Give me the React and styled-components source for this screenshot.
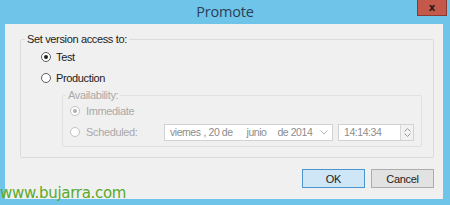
import styled, { createGlobalStyle } from 'styled-components'

const Global = createGlobalStyle`
  html, body {
    margin: 0;
    padding: 0;
    background: #6fc4ea;
  }
  * { box-sizing: border-box; }
`

const Window = styled.div`
  position: relative;
  width: 450px;
  height: 205px;
  background: #6fc4ea;
  display: flex;
  flex-direction: column;
  font-family: "Liberation Sans", Arial, sans-serif;
  overflow: hidden;
`

const TitleBar = styled.div`
  height: 24px;
  display: grid;
  grid-template-columns: 1fr auto 1fr;
  align-items: start;
`

const Title = styled.div`
  grid-column: 2;
  font-family: "Open Sans", "Noto Sans", sans-serif;
  font-size: 14.5px;
  color: #2b3f55;
  line-height: 24px;
  letter-spacing: -0.2px;
`

const CloseButton = styled.div`
  grid-column: 3;
  justify-self: end;
  margin-right: 3px;
  width: 30px;
  height: 16px;
  background: #c4584a;
  border: 1px solid #8a3a30;
  border-top: none;
  display: flex;
  align-items: center;
  justify-content: center;
  color: #1c1c1c;
  font-family: "DejaVu Sans", sans-serif;
  font-weight: bold;
  font-size: 10px;
`

const Body = styled.div`
  flex: 1;
  margin: 0 7px 6px 5px;
  background: #f0f0f0;
  padding: 9px 9px 0 15px;
  display: flex;
  flex-direction: column;
`

const Group = styled.fieldset`
  margin: 0;
  border: 1px solid ${p => (p.$disabled ? '#e0e0e0' : '#dcdcdc')};
  border-radius: 2px;
  padding: ${p => p.$pad};
  display: flex;
  flex-direction: column;
  gap: ${p => p.$gap};
`

const Legend = styled.legend`
  padding: 0 2px;
  margin-left: ${p => p.$shift};
  font-size: 11px;
  letter-spacing: -0.35px;
  line-height: 13px;
  color: ${p => (p.$disabled ? '#aaaaaa' : '#222')};
`

const Row = styled.div`
  display: flex;
  align-items: center;
  height: 16px;
`

const Radio = styled.span`
  width: 10px;
  height: 10px;
  border-radius: 50%;
  border: 1px solid ${p => (p.$disabled ? '#c2c2c2' : '#5e5e5e')};
  background: #fff;
  display: flex;
  align-items: center;
  justify-content: center;
  flex-shrink: 0;

  &::after {
    content: '';
    width: 4px;
    height: 4px;
    border-radius: 50%;
    background: ${p => (p.$disabled ? '#b0b0b0' : '#222')};
    display: ${p => (p.$checked ? 'block' : 'none')};
  }
`

const Label = styled.span`
  margin-left: ${p => p.$gap || '5px'};
  width: ${p => p.$width || 'auto'};
  font-size: 11px;
  letter-spacing: -0.35px;
  color: ${p => (p.$disabled ? '#a9a9a9' : '#1a1a1a')};
`

const Field = styled.div`
  height: 17px;
  width: ${p => p.$width};
  margin-left: ${p => p.$ml || '0'};
  border: 1px solid #d2d2d2;
  background: #fff;
  display: flex;
  align-items: center;
  font-size: 10.5px;
  letter-spacing: -0.45px;
  color: #8c8c8c;
  padding-left: 5px;
  white-space: pre;
`

const Part = styled.span`
  margin-left: ${p => p.$ml || '0'};
`

const Spacer = styled.span`
  flex: 1;
`

const Chevron = styled.span`
  width: 16px;
  display: flex;
  justify-content: center;
`

const Spin = styled.div`
  width: 13px;
  height: 15px;
  border-left: 1px solid #d6d6d6;
  background: #f2f2f2;
  display: flex;
  flex-direction: column;
  align-items: center;
  justify-content: center;
  gap: 1px;
`

const Buttons = styled.div`
  display: flex;
  justify-content: flex-end;
  gap: 6px;
  margin-top: 11px;
`

const Button = styled.div`
  width: 63px;
  height: 19px;
  border: 1px solid ${p => (p.$primary ? '#4a95cf' : '#adadad')};
  background: ${p => (p.$primary ? '#cfe6f7' : '#e2e2e2')};
  display: flex;
  align-items: center;
  justify-content: center;
  font-size: 11px;
  letter-spacing: -0.3px;
  color: #222;
`

const Watermark = styled.div`
  position: absolute;
  left: 0;
  bottom: 4px;
  font-family: "DejaVu Sans", Verdana, sans-serif;
  font-size: 15px;
  letter-spacing: -0.3px;
  color: #5aa92a;
  line-height: 16px;
`

const Arrow = ({ up }) => (
  <svg width="7" height="4" viewBox="0 0 7 4">
    <path d={up ? 'M0.5 3.5 L3.5 0.5 L6.5 3.5' : 'M0.5 0.5 L3.5 3.5 L6.5 0.5'} fill="none" stroke="#9a9a9a" strokeWidth="1" />
  </svg>
)

const App = () => (
  <Window>
    <Global />
    <TitleBar>
      <Title>Promote</Title>
      <CloseButton>x</CloseButton>
    </TitleBar>
    <Body>
      <Group $pad="3px 11px 11px 20px" $gap="5px" style={{ height: '125px' }}>
        <Legend $shift="-16px">Set version access to:</Legend>
        <Row>
          <Radio $checked />
          <Label>Test</Label>
        </Row>
        <Row>
          <Radio />
          <Label>Production</Label>
        </Row>
        <Group $disabled $pad="1px 7px 6px 7px" $gap="5px" style={{ marginLeft: '21px', marginTop: '-2px' }}>
          <Legend $disabled $shift="-4px">Availability:</Legend>
          <Row>
            <Radio $disabled $checked />
            <Label $disabled $gap="6px">Immediate</Label>
          </Row>
          <Row>
            <Radio $disabled />
            <Label $disabled $gap="6px" $width="78px">Scheduled:</Label>
            <Field $width="169px">
              <Part>viemes</Part>
              <Part $ml="3px">, 20 de</Part>
              <Part $ml="14px">junio</Part>
              <Part $ml="11px">de 2014</Part>
              <Spacer />
              <Chevron>
                <svg width="8" height="5" viewBox="0 0 8 5">
                  <path d="M0.5 0.5 L4 4 L7.5 0.5" fill="none" stroke="#b5b5b5" strokeWidth="1" />
                </svg>
              </Chevron>
            </Field>
            <Field $width="76px" $ml="5px">
              14:14:34
              <Spacer />
              <Spin>
                <Arrow up />
                <Arrow />
              </Spin>
            </Field>
          </Row>
        </Group>
      </Group>
      <Buttons>
        <Button $primary>OK</Button>
        <Button>Cancel</Button>
      </Buttons>
    </Body>
    <Watermark>www.bujarra.com</Watermark>
  </Window>
)

export default App
